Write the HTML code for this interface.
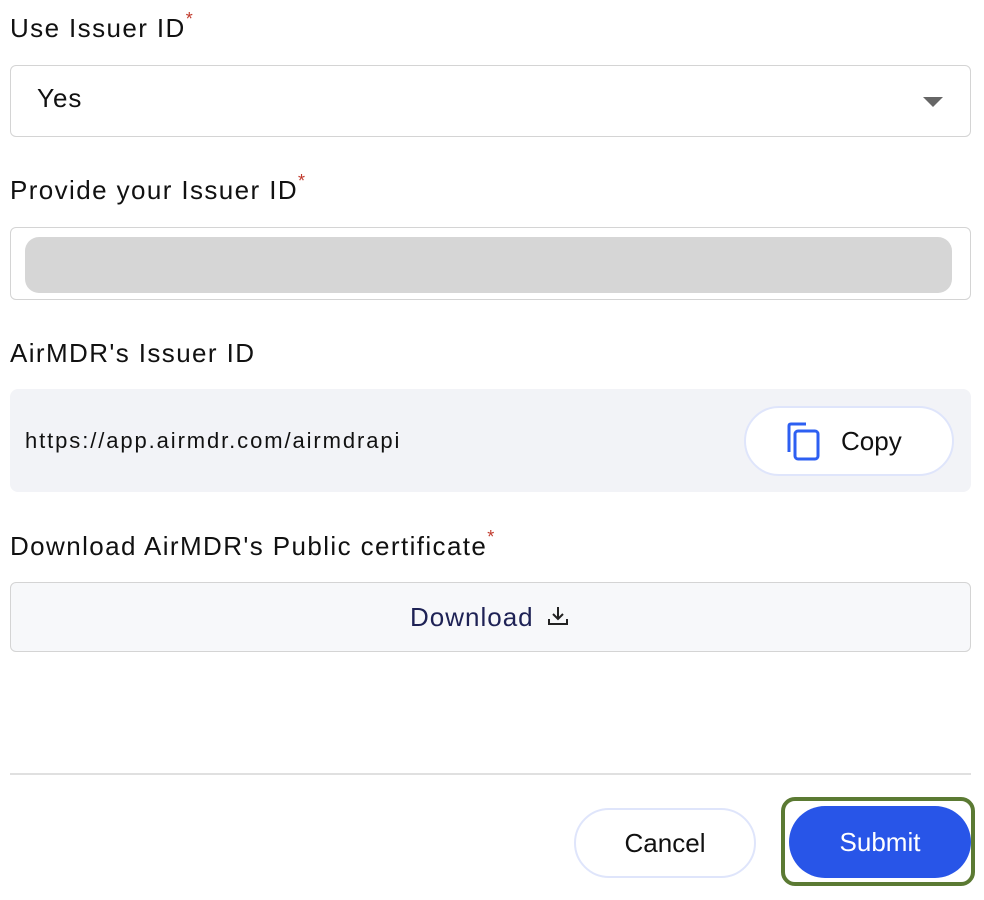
<!DOCTYPE html><html><head><style>
body{margin:0;width:984px;height:900px;background:#fff;font-family:"Liberation Sans",sans-serif;position:relative;overflow:hidden;color:#111}
.a{position:absolute}
.lbl{font-size:26px;letter-spacing:1.4px;left:10px}
.lbl sup{color:#c0392b;font-size:18px;vertical-align:top;position:relative;top:-4px}
.box{border:1.5px solid #d4d4d4;border-radius:6px;box-sizing:border-box}
</style></head><body>
<div class="a lbl" style="top:13px">Use Issuer ID<sup>*</sup></div>
<div class="a box" style="left:10px;top:65px;width:961px;height:72px"></div>
<div class="a" style="left:37px;top:83px;font-size:26px;letter-spacing:1px">Yes</div>
<div class="a" style="left:923px;top:97px;width:0;height:0;border-left:10px solid transparent;border-right:10px solid transparent;border-top:10px solid #666"></div>
<div class="a lbl" style="top:175px">Provide your Issuer ID<sup>*</sup></div>
<div class="a box" style="left:10px;top:227px;width:961px;height:73px"></div>
<div class="a" style="left:25px;top:237px;width:927px;height:56px;border-radius:14px;background:#d6d6d6"></div>
<div class="a lbl" style="top:338px">AirMDR's Issuer ID</div>
<div class="a" style="left:10px;top:389px;width:961px;height:103px;background:#f2f3f7;border-radius:8px"></div>
<div class="a" style="left:25px;top:428px;font-size:22px;letter-spacing:1.9px">https://app.airmdr.com/airmdrapi</div>
<div class="a" style="left:744px;top:406px;width:210px;height:70px;box-sizing:border-box;border:2px solid #dfe5fb;border-radius:35px;background:#fff"></div>
<svg class="a" style="left:786px;top:422px" width="36" height="40" viewBox="0 0 36 40"><path d="M3 30V4Q3 2 5 2H20" stroke="#2d5ff2" stroke-width="3" fill="none"/><rect x="9" y="9" width="23" height="28" rx="3" stroke="#2d5ff2" stroke-width="3" fill="none"/></svg>
<div class="a" style="left:841px;top:426px;font-size:26px">Copy</div>
<div class="a lbl" style="top:531px">Download AirMDR's Public certificate<sup>*</sup></div>
<div class="a box" style="left:10px;top:582px;width:961px;height:70px;background:#f7f8fa"></div>
<div class="a" style="left:410px;top:602px;font-size:26px;letter-spacing:1px;color:#1e2255">Download</div>
<svg class="a" style="left:546px;top:604px" width="24" height="24" viewBox="0 0 24 24"><path d="M12 3V15M7 10L12 15L17 10M3 15V20H21V15" stroke="#222" stroke-width="2" fill="none"/></svg>
<div class="a" style="left:10px;top:773px;width:961px;height:2px;background:#e0e0e0"></div>
<div class="a" style="left:574px;top:808px;width:182px;height:70px;box-sizing:border-box;border:2px solid #dfe5fb;border-radius:35px;background:#fff;font-size:26px;text-align:center;line-height:66px">Cancel</div>
<div class="a" style="left:781px;top:797px;width:194px;height:89px;box-sizing:border-box;border:4px solid #5b7a33;border-radius:14px"></div>
<div class="a" style="left:789px;top:806px;width:182px;height:72px;border-radius:36px;background:#2855e8;color:#fff;font-size:26px;text-align:center;line-height:72px">Submit</div>
</body></html>
